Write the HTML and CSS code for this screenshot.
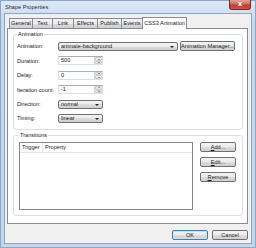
FILE: index.html
```
<!DOCTYPE html>
<html lang="en">
  <head>
    <meta charset="UTF-8" />
    <title>Shape Properties</title>
    <link rel="stylesheet" href="styles.css">
  </head>
  <body>
    <div class="window">
      <div class="titlebar">
        <span class="title">Shape Properties</span>
        <span class="close">x</span>
      </div>

      <div class="client">
        <div class="tabs">
          <div class="tab tab-general">General</div>
          <div class="tab tab-text">Text</div>
          <div class="tab tab-link">Link</div>
          <div class="tab tab-effects">Effects</div>
          <div class="tab tab-publish">Publish</div>
          <div class="tab tab-events">Events</div>
          <div class="tab tab-anim active">CSS3 Animation</div>
        </div>

        <div class="panel">
          <fieldset class="group group-anim">
            <legend>Animation</legend>
            <div class="rows">
              <div class="row row-first">
                <label>Animation:</label>
                <div class="combo combo-wide">animate-background</div>
                <button class="btn btn-manager">Animation Manager...</button>
              </div>
              <div class="row">
                <label>Duration:</label>
                <div class="spin">
                  <span class="val">500</span>
                  <span class="arrows"><i class="up"></i><i class="down"></i></span>
                </div>
              </div>
              <div class="row">
                <label>Delay:</label>
                <div class="spin">
                  <span class="val">0</span>
                  <span class="arrows"><i class="up"></i><i class="down"></i></span>
                </div>
              </div>
              <div class="row">
                <label>Iteration count:</label>
                <div class="spin">
                  <span class="val">-1</span>
                  <span class="arrows"><i class="up"></i><i class="down"></i></span>
                </div>
              </div>
              <div class="row">
                <label>Direction:</label>
                <div class="combo combo-small">normal</div>
              </div>
              <div class="row">
                <label>Timing:</label>
                <div class="combo combo-small">linear</div>
              </div>
            </div>
          </fieldset>

          <fieldset class="group group-trans">
            <legend>Transitions</legend>
            <div class="trans-body">
              <div class="list">
                <div class="list-head">
                  <span class="col col-trigger">Trigger</span>
                  <span class="col col-prop">Property</span>
                </div>
              </div>
              <div class="side-btns">
                <button class="btn btn-side"><u>A</u>dd...</button>
                <button class="btn btn-side"><u>E</u>dit...</button>
                <button class="btn btn-side"><u>R</u>emove</button>
              </div>
            </div>
          </fieldset>
        </div>

        <div class="footer">
          <button class="btn btn-footer default">OK</button>
          <button class="btn btn-footer">Cancel</button>
        </div>
      </div>
    </div>
  </body>
</html>
```

FILE: styles.css
```
* {
  box-sizing: border-box;
}

body {
  margin: 0;
  font-family: "Liberation Sans", Arial, sans-serif;
  font-size: 5.6px;
  color: #1a1a1a;
}

.window {
  width: 256px;
  height: 248px;
  padding: 0 4px 4px;
  display: flex;
  flex-direction: column;
  background: linear-gradient(#dfe8f3, #c6d8ed 24px, #c2d6ec);
  box-shadow: inset 0 0 0 1px #8aa6c8;
}

.titlebar {
  height: 13px;
  display: flex;
  align-items: flex-start;
}

.title {
  padding: 4px 0 0 1px;
  line-height: 6px;
  color: #1c2a3a;
}

.close {
  margin-left: auto;
  margin-right: 1px;
  width: 22px;
  height: 10px;
  border: 1px solid #6e2a25;
  border-top: none;
  border-radius: 0 0 3px 3px;
  background: linear-gradient(#e3a397, #d16a5c 45%, #bb3b2d 55%, #c9574a);
  color: #fff;
  font-family: "DejaVu Sans", sans-serif;
  font-weight: bold;
  font-size: 7px;
  line-height: 8px;
  text-align: center;
}

.client {
  flex: 1;
  display: flex;
  flex-direction: column;
  background: #f0f0f0;
  border: 1px solid #8ea5c1;
  padding: 4px 3px 0 2px;
}

/* tab strip */
.tabs {
  height: 10px;
  display: flex;
  align-items: flex-end;
  padding-left: 2px;
}

.tab {
  height: 10px;
  border: 1px solid #898c95;
  border-bottom: none;
  margin-left: -1px;
  background: linear-gradient(#f3f3f3, #ebebeb 50%, #dddddd 50%, #cfcfcf);
  text-align: center;
  line-height: 8px;
  white-space: nowrap;
}

.tab-general { width: 24px; margin-left: 0; }
.tab-text { width: 21px; }
.tab-link { width: 22px; }
.tab-effects { width: 25px; }
.tab-publish { width: 25px; }
.tab-events { width: 22px; }

.tab.active {
  width: 45px;
  height: 12px;
  margin-bottom: -1px;
  background: #fff;
  position: relative;
  z-index: 1;
  line-height: 10px;
}

.panel {
  flex: 1;
  background: #fff;
  border: 1px solid #898c95;
  padding: 2px 4px 7px 5px;
  display: flex;
  flex-direction: column;
  gap: 2px;
}

/* group boxes */
.group {
  margin: 0;
  min-width: 0;
  border: 1px solid #d5dfe5;
  border-radius: 3px;
  padding: 3px 5px 6px 3px;
}

.group legend {
  padding: 0 1px;
  line-height: 7px;
}

.group-trans {
  flex: 1;
  padding: 3px 5px 5px 5px;
  display: flex;
}

.rows {
  display: flex;
  flex-direction: column;
  gap: 5.4px;
}

.row {
  height: 9px;
  display: flex;
  align-items: center;
}

.row-first {
  height: 10px;
}

.row label {
  width: 41px;
  flex-shrink: 0;
}

/* controls */
.combo {
  height: 9px;
  border: 1px solid #707070;
  border-radius: 2px;
  background: linear-gradient(#f3f3f3, #ebebeb 50%, #dddddd 50%, #cfcfcf);
  padding-left: 2px;
  line-height: 7px;
  position: relative;
}

.combo::after {
  content: "";
  position: absolute;
  right: 3px;
  top: 3px;
  border-left: 2px solid transparent;
  border-right: 2px solid transparent;
  border-top: 2px solid #222;
}

.combo-wide {
  width: 120px;
}

.combo-small {
  width: 45px;
}

.spin {
  width: 45px;
  height: 9px;
  display: flex;
  background: #fff;
  border: 1px solid #dbdfe6;
  border-top-color: #abadb3;
}

.spin .val {
  flex: 1;
  padding-left: 2px;
  line-height: 7px;
}

.spin .arrows {
  width: 8px;
  display: flex;
  flex-direction: column;
  border-left: 1px solid #d0d3d8;
}

.spin i {
  flex: 1;
  display: flex;
  align-items: center;
  justify-content: center;
  background: linear-gradient(#f5f5f5, #e3e3e3);
  border: 1px solid #c9ccd1;
  border-radius: 1px;
}

.spin i::after {
  content: "";
  border-left: 1.5px solid transparent;
  border-right: 1.5px solid transparent;
}

.spin .up::after {
  border-bottom: 1.5px solid #444;
}

.spin .down::after {
  border-top: 1.5px solid #444;
}

.btn {
  font: inherit;
  color: inherit;
  margin: 0;
  padding: 0;
  height: 10px;
  border: 1px solid #707070;
  border-radius: 2px;
  background: linear-gradient(#f3f3f3, #ebebeb 50%, #dddddd 50%, #cfcfcf);
  line-height: 8px;
  text-align: center;
  white-space: nowrap;
}

.btn-manager {
  width: 55px;
  margin-left: 2px;
}

.btn u {
  text-decoration-thickness: 0.5px;
}

/* transitions list */
.trans-body {
  flex: 1;
  display: flex;
  gap: 7px;
}

.list {
  width: 174px;
  border: 1px solid #828790;
  background: #fff;
}

.list-head {
  height: 10px;
  display: flex;
  border-bottom: 1px solid #e5e5e5;
}

.col {
  line-height: 9px;
  padding-left: 2px;
}

.col-trigger {
  width: 23px;
  border-right: 1px solid #e5e5e5;
}

.side-btns {
  display: flex;
  flex-direction: column;
  gap: 5px;
}

.btn-side {
  width: 36px;
}

/* dialog buttons */
.footer {
  height: 19px;
  display: flex;
  justify-content: flex-end;
  gap: 4px;
  padding-top: 6px;
}

.btn-footer {
  width: 36px;
}

.btn.default {
  border-color: #3c7fb1;
  box-shadow: inset 0 0 0 1px #bfe3f7;
}
```
